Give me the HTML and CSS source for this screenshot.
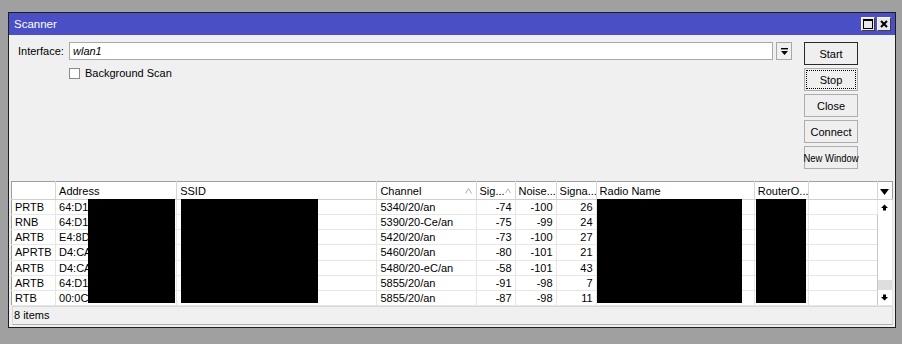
FILE: index.html
```html
<!DOCTYPE html>
<html>
<head>
<meta charset="utf-8">
<title>Scanner</title>
<link rel="stylesheet" href="styles.css">
</head>
<body>
<div class="window">
  <div class="titlebar">
    <span class="title">Scanner</span>
    <span class="tb-btns">
      <span class="tb-btn"><svg width="12" height="12" viewBox="0 0 12 12"><rect x="1.5" y="1.5" width="9" height="9" fill="none" stroke="#000" stroke-width="1"/><rect x="1" y="1" width="10" height="2" fill="#000"/></svg></span>
      <span class="tb-btn"><svg width="12" height="12" viewBox="0 0 12 12"><path d="M3 3 L9 9 M9 3 L3 9" stroke="#000" stroke-width="2"/></svg></span>
    </span>
  </div>
  <div class="top">
    <div class="form">
      <div class="iface-row">
        <label class="lbl">Interface:</label>
        <div class="input">wlan1</div>
        <div class="dd"><svg width="9" height="9" viewBox="0 0 9 9"><rect x="1" y="1" width="7" height="1.4" fill="#000"/><path d="M1 4 H8 L4.5 8 Z" fill="#000"/></svg></div>
      </div>
      <div class="check-row">
        <span class="checkbox"></span>
        <span>Background Scan</span>
      </div>
    </div>
    <div class="buttons">
      <div class="btn default">Start</div>
      <div class="btn focus"><span>Stop</span></div>
      <div class="btn">Close</div>
      <div class="btn">Connect</div>
      <div class="btn"><span class="narrow">New Window</span></div>
    </div>
  </div>
  <div class="grid-wrap">
    <table class="grid">
      <colgroup>
        <col class="c-flags"><col class="c-addr"><col class="c-ssid"><col class="c-chan"><col class="c-sig"><col class="c-noise"><col class="c-sn"><col class="c-radio"><col class="c-ros"><col class="c-blank"><col class="c-scroll">
      </colgroup>
      <thead>
        <tr>
          <th></th>
          <th>Address</th>
          <th>SSID</th>
          <th><span class="hd">Channel<svg class="sort" width="7" height="6" viewBox="0 0 7 6"><path d="M0.5 5.5 L3.5 0.5 L6.5 5.5" fill="none" stroke="#a8a8a8"/></svg></span></th>
          <th><span class="hd">Sig...<svg class="sort" width="7" height="6" viewBox="0 0 7 6"><path d="M0.5 5.5 L3.5 0.5 L6.5 5.5" fill="none" stroke="#a8a8a8"/></svg></span></th>
          <th>Noise...</th>
          <th>Signa...</th>
          <th>Radio Name</th>
          <th>RouterO...</th>
          <th></th>
          <th class="menu"><svg width="9" height="6" viewBox="0 0 9 6"><path d="M0 0 H9 L4.5 6 Z" fill="#000"/></svg></th>
        </tr>
      </thead>
      <tbody>
        <tr><td>PRTB</td><td>64:D1</td><td></td><td>5340/20/an</td><td class="num">-74</td><td class="num">-100</td><td class="num">26</td><td></td><td></td><td></td>
          <td class="scroll" rowspan="7">
            <div class="sb">
              <div class="sb-btn"><svg width="7" height="7" viewBox="0 0 7 7"><path d="M0 4 L3.5 0.5 L7 4 Z M2 4 H5 V6.5 H2 Z" fill="#000"/></svg></div>
              <div class="sb-track"></div>
              <div class="sb-thumb"></div>
              <div class="sb-btn"><svg width="7" height="7" viewBox="0 0 7 7"><path d="M0 3 L3.5 6.5 L7 3 Z M2 0.5 H5 V3 H2 Z" fill="#000"/></svg></div>
            </div>
          </td>
        </tr>
        <tr><td>RNB</td><td>64:D1</td><td></td><td>5390/20-Ce/an</td><td class="num">-75</td><td class="num">-99</td><td class="num">24</td><td></td><td></td><td></td></tr>
        <tr><td>ARTB</td><td>E4:8D</td><td></td><td>5420/20/an</td><td class="num">-73</td><td class="num">-100</td><td class="num">27</td><td></td><td></td><td></td></tr>
        <tr><td>APRTB</td><td>D4:CA</td><td></td><td>5460/20/an</td><td class="num">-80</td><td class="num">-101</td><td class="num">21</td><td></td><td></td><td></td></tr>
        <tr><td>ARTB</td><td>D4:CA</td><td></td><td>5480/20-eC/an</td><td class="num">-58</td><td class="num">-101</td><td class="num">43</td><td></td><td></td><td></td></tr>
        <tr><td>ARTB</td><td>64:D1</td><td></td><td>5855/20/an</td><td class="num">-91</td><td class="num">-98</td><td class="num">7</td><td></td><td></td><td></td></tr>
        <tr><td>RTB</td><td>00:0C</td><td></td><td>5855/20/an</td><td class="num">-87</td><td class="num">-98</td><td class="num">11</td><td></td><td></td><td></td></tr>
      </tbody>
    </table>
    <div class="redact r-addr"></div>
    <div class="redact r-ssid"></div>
    <div class="redact r-radio"></div>
    <div class="redact r-ros"></div>
  </div>
  <div class="status">8 items</div>
</div>
</body>
</html>
```
FILE: styles.css
```css
html, body {
  margin: 0;
  padding: 0;
}
body {
  background: #a0a0a0;
  font: 11px "Liberation Sans", Arial, sans-serif;
  color: #000;
}
.window {
  margin: 12px 0 0 8px;
  width: 888px;
  height: 316px;
  box-sizing: border-box;
  border: 1px solid #1e1e1e;
  background: #f0f0f0;
  display: flex;
  flex-direction: column;
}
.titlebar {
  height: 22px;
  background: #4b4fc5;
  color: #fff;
  display: flex;
  align-items: center;
  justify-content: space-between;
  padding: 0 4px 0 5px;
  font-size: 11.5px;
}
.tb-btns {
  display: flex;
  gap: 2px;
}
.tb-btn {
  width: 14px;
  height: 14px;
  box-sizing: border-box;
  background: #e8e8e8;
  border: 1px solid #f8f8f8;
  border-right-color: #404040;
  border-bottom-color: #404040;
  display: flex;
  align-items: center;
  justify-content: center;
}
.top {
  display: flex;
  padding: 7px 37px 0 9px;
}
.form {
  flex: 1;
}
.iface-row {
  display: flex;
  align-items: center;
  height: 18px;
}
.lbl {
  width: 51px;
}
.input {
  width: 704px;
  height: 18px;
  box-sizing: border-box;
  border: 1px solid #a8a8a8;
  background: #fff;
  font-style: italic;
  padding: 2px 3px;
  line-height: 13px;
}
.dd {
  margin-left: 3px;
  width: 16px;
  height: 18px;
  box-sizing: border-box;
  border: 1px solid #a8a8a8;
  background: #f0f0f0;
  display: flex;
  align-items: center;
  justify-content: center;
}
.check-row {
  display: flex;
  align-items: center;
  margin: 7px 0 0 51px;
  height: 12px;
  gap: 5px;
}
.checkbox {
  width: 11px;
  height: 11px;
  box-sizing: border-box;
  border: 1px solid #8a8a8a;
  background: #fff;
}
.buttons {
  width: 54px;
  margin-left: 12px;
  display: flex;
  flex-direction: column;
  gap: 3px;
}
.btn {
  height: 23px;
  box-sizing: border-box;
  border: 1px solid #adadad;
  background: #efefef;
  display: flex;
  align-items: center;
  justify-content: center;
  white-space: nowrap;
}
.narrow {
  display: inline-block;
  transform: scaleX(0.86);
}
.btn.default {
  border-color: #2a2a2a;
}
.btn.focus {
  border-color: #adadad;
  padding: 1px;
}
.btn.focus span {
  flex: 1;
  align-self: stretch;
  display: flex;
  align-items: center;
  justify-content: center;
  border: 1px dotted #000;
}
.grid-wrap {
  position: relative;
  margin: 12px 2px 0 2px;
}
.grid {
  width: 882px;
  table-layout: fixed;
  border-collapse: collapse;
  border: 1px solid #a0a0a0;
  background: #fff;
}
.c-flags { width: 44px; }
.c-addr { width: 121px; }
.c-ssid { width: 200px; }
.c-chan { width: 99px; }
.c-sig { width: 39px; }
.c-noise { width: 41px; }
.c-sn { width: 40px; }
.c-radio { width: 158px; }
.c-ros { width: 54px; }
.c-blank { width: 69px; }
.c-scroll { width: 15px; }
.grid th {
  height: 17px;
  padding: 0 3px;
  font-weight: normal;
  text-align: left;
  white-space: nowrap;
  overflow: hidden;
  border-right: 1px solid #d6d6d6;
  border-bottom: 1px solid #d0d0d0;
  background: #fff;
}
.hd {
  display: flex;
  align-items: center;
  justify-content: space-between;
}
.sort {
  margin-right: 1px;
}
.grid th.menu {
  padding: 0;
  text-align: center;
  border-right: none;
}
.grid td {
  height: 14px;
  padding: 0 3px;
  white-space: nowrap;
  overflow: hidden;
  line-height: 14px;
  border-right: 1px solid #e6e6e6;
  border-bottom: 1px solid #e6e6e6;
}
.grid td.num {
  text-align: right;
}
.grid td.scroll {
  padding: 0;
  border-left: 1px solid #c8c8c8;
  vertical-align: top;
  background: #fff;
}
.sb {
  display: flex;
  flex-direction: column;
  height: 105px;
}
.sb-btn {
  height: 15px;
  display: flex;
  align-items: center;
  justify-content: center;
  background: #fff;
}
.sb-track {
  flex: 1;
  background: #fff;
}
.sb-thumb {
  height: 10px;
  background: #dedede;
}
.redact {
  position: absolute;
  background: #000;
  top: 18px;
  height: 104px;
}
.r-addr { left: 77px; width: 87px; }
.r-ssid { left: 170px; width: 137px; }
.r-radio { left: 586px; width: 145px; }
.r-ros { left: 745px; width: 50px; }
.status {
  margin: 0 2px 0 3px;
  height: 19px;
  box-sizing: border-box;
  border: 1px solid #d8d8d8;
  border-bottom-color: #b0b0b0;
  padding: 2px 1px;
  line-height: 13px;
}
```
